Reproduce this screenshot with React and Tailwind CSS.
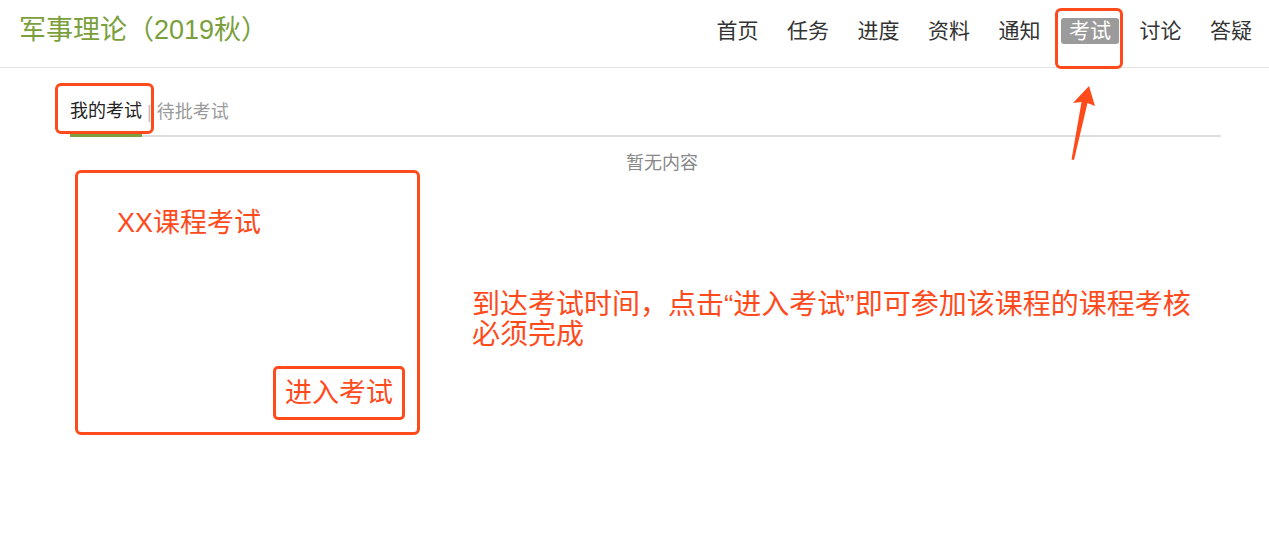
import React from "react";

const FONT = { fontFamily: '"Liberation Sans", "Noto Sans CJK SC", "Noto Sans", sans-serif' };

export default function App() {
  const nav = ["首页", "任务", "进度", "资料", "通知", "考试", "讨论", "答疑"];
  return (
    <div lang="zh-CN" className="relative w-[1269px] h-[540px] bg-white overflow-hidden" style={FONT}>
      {/* Header */}
      <header className="flex items-center justify-between h-[68px] pl-[19px] pr-[9px] border-b border-[#e3e3e3]">
        <div className="text-[27px] leading-[36px] text-[#7a9f3c] -mt-[8px]">军事理论（2019秋）</div>
        <nav className="flex items-center gap-[12.5px] -mt-[6px]">
          {nav.map((n) =>
            n === "考试" ? (
              <span key={n} className="px-[8px] h-[26px] leading-[26px] text-[21px] text-white bg-[#9b9b9b] rounded-[3px]">
                {n}
              </span>
            ) : (
              <span key={n} className="px-[8px] h-[26px] leading-[26px] text-[21px] text-[#333]">
                {n}
              </span>
            )
          )}
        </nav>
      </header>

      {/* Content */}
      <main className="ml-[70px] mr-[48px]">
        <div className="mt-[31px] flex items-end border-b-2 border-[#dedede]">
          <div className="text-[18px] leading-[24px] pb-[11px] border-b-[3px] border-[#7ca03e] -mb-[2px] text-[#222]">
            我的考试
          </div>
          <div className="text-[18px] leading-[24px] pb-[11px] mx-[5px] text-[#bbb]">|</div>
          <div className="text-[18px] leading-[24px] pb-[11px] text-[#9a9a9a]">待批考试</div>
        </div>
        <div className="mt-[16px] h-[20px] leading-[20px] text-[18px] text-[#888] text-center pl-[33px]">暂无内容</div>

        <div className="-mt-[3px] flex items-start">
          <div className="ml-[5px] w-[345px] h-[265px] border-[3px] border-[#ff4a1c] rounded-[6px] flex flex-col justify-between pt-[32px] pl-[39px] pr-[12px] pb-[12px]">
            <div className="text-[27px] leading-[36px] text-[#ff4a1c]">XX课程考试</div>
            <div className="self-end w-[132px] h-[54px] border-[3px] border-[#ff4a1c] rounded-[5px] flex items-center justify-center text-[27px] text-[#ff4a1c]">
              进入考试
            </div>
          </div>
          <div className="ml-[52px] mt-[120px] text-[28px] leading-[30px] text-[#ff4a1c]">
            到达考试时间，点击“进入考试”即可参加该课程的课程考核
            <br />
            必须完成
          </div>
        </div>
      </main>

      {/* Annotation overlays */}
      <div className="absolute left-[55px] top-[83px] w-[99px] h-[51px] border-[3px] border-[#ff4a1c] rounded-[6px]" />
      <div className="absolute left-[1055px] top-[8px] w-[68px] h-[61px] border-[3px] border-[#ff4a1c] rounded-[6px]" />
      <svg className="absolute left-[1060px] top-[80px]" width="45" height="90" viewBox="0 0 45 90">
        <polygon
          points="29,6 35,26 27.5,23 14,80 11.5,79.5 21.5,22 13,23"
          fill="#ff4a1c"
        />
      </svg>
    </div>
  );
}
